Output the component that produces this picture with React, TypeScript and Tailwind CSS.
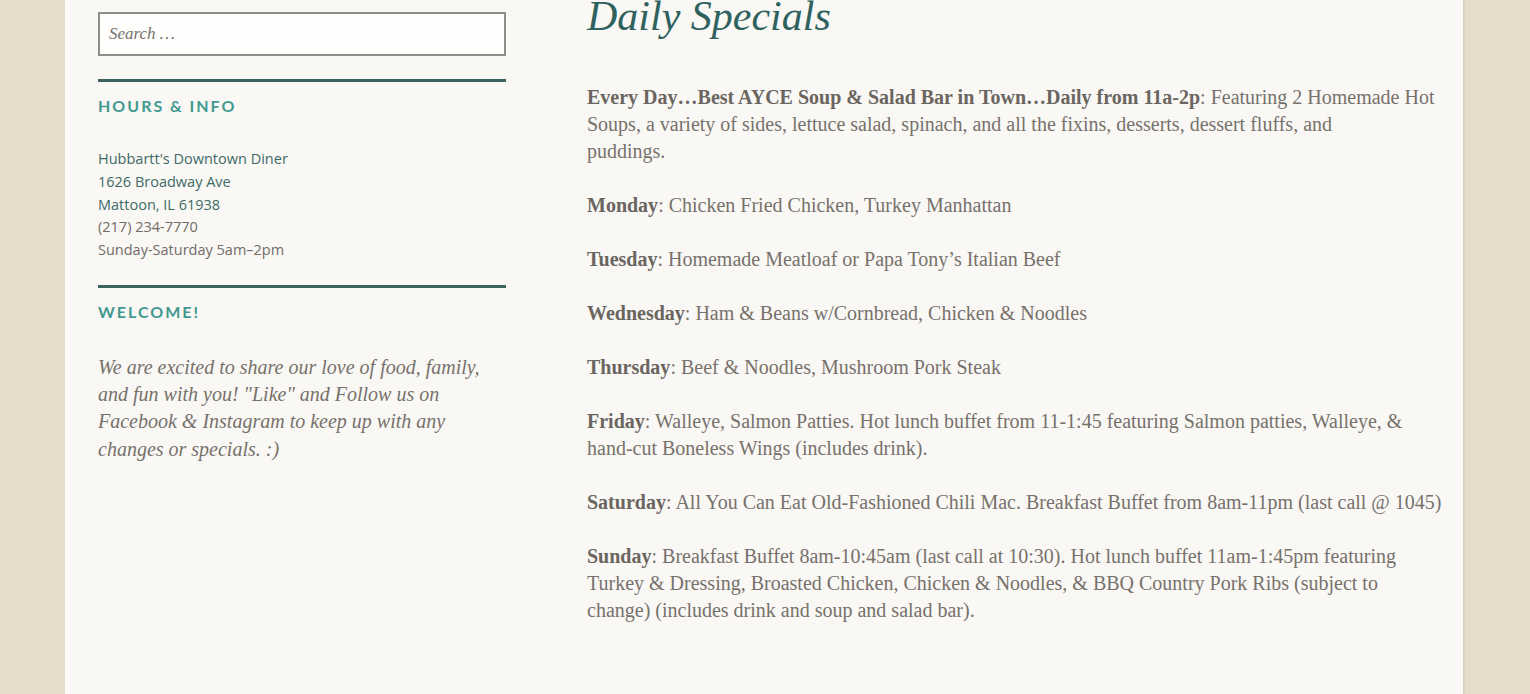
import { Fragment } from 'react';

const serif = { fontFamily: '"Liberation Serif", "DejaVu Serif", serif' };
const sans = { fontFamily: '"Open Sans", Lato, sans-serif' };

// line breaks follow the original layout
const specials = [
  {
    day: 'Every Day…Best AYCE Soup & Salad Bar in Town…Daily from 11a-2p',
    text: 'Featuring 2 Homemade Hot\nSoups, a variety of sides, lettuce salad, spinach, and all the fixins, desserts, dessert fluffs, and\npuddings.',
  },
  { day: 'Monday', text: 'Chicken Fried Chicken, Turkey Manhattan' },
  { day: 'Tuesday', text: 'Homemade Meatloaf or Papa Tony’s Italian Beef' },
  { day: 'Wednesday', text: 'Ham & Beans w/Cornbread, Chicken & Noodles' },
  { day: 'Thursday', text: 'Beef & Noodles,  Mushroom Pork Steak' },
  {
    day: 'Friday',
    text: 'Walleye, Salmon Patties. Hot lunch buffet from 11-1:45 featuring Salmon patties, Walleye, &\nhand-cut Boneless Wings (includes drink).',
  },
  {
    day: 'Saturday',
    text: 'All You Can Eat Old-Fashioned Chili Mac. Breakfast Buffet from 8am-11pm (last call @ 1045)',
  },
  {
    day: 'Sunday',
    text: 'Breakfast Buffet 8am-10:45am (last call at 10:30). Hot lunch buffet 11am-1:45pm featuring\nTurkey & Dressing, Broasted Chicken, Chicken & Noodles, & BBQ Country Pork Ribs (subject to\nchange) (includes drink and soup and salad bar).',
  },
];

function WidgetTitle({ children }: { children: string }) {
  return (
    <div className="border-t-[3px] border-[#3b625f] pt-[14px]">
      <h2
        className="text-[16px] font-bold tracking-[2px] text-[#42998f] leading-[20px]"
        style={{ fontFamily: 'Lato, "Open Sans", sans-serif' }}
      >
        {children}
      </h2>
    </div>
  );
}

function Sidebar() {
  return (
    <aside className="w-[408px] shrink-0 pt-[12px]">
      <div className="h-[44px] border-2 border-[#8d8d8a] bg-[#fefefd] flex items-center px-[9px]">
        <span className="italic text-[17px] text-[#77726d]" style={serif}>
          Search …
        </span>
      </div>

      <div className="mt-[23px]">
        <WidgetTitle>HOURS &amp; INFO</WidgetTitle>
        <div className="mt-[32px] text-[14.5px] leading-[22.75px] text-[#726c66]" style={sans}>
          <div className="text-[#3e6a67]">Hubbartt's Downtown Diner</div>
          <div className="text-[#3e6a67]">1626 Broadway Ave</div>
          <div className="text-[#3e6a67]">Mattoon, IL 61938</div>
          <div>(217) 234-7770</div>
          <div>Sunday-Saturday 5am–2pm</div>
        </div>
      </div>

      <div className="mt-[23px]">
        <WidgetTitle>WELCOME!</WidgetTitle>
        <p
          className="mt-[32px] italic text-[20px] leading-[27.3px] text-[#77716b]"
          style={serif}
        >
          We are excited to share our love of food, family, and fun with you! "Like" and Follow us on
          Facebook &amp; Instagram to keep up with any changes or specials. :)
        </p>
      </div>
    </aside>
  );
}

function Main() {
  return (
    <main className="ml-[81px] w-[860px]">
      <h1 className="italic text-[42px] leading-[40px] text-[#2f625e] -mt-[4px]" style={serif}>
        Daily Specials
      </h1>
      <div className="mt-[48px] text-[20px] leading-[27px] text-[#77716b]" style={serif}>
        {specials.map((s) => (
          <p key={s.day} className="mb-[27px]">
            <strong className="font-bold text-[#6b655f]">{s.day}</strong>:{' '}
            {s.text.split('\n').map((line, i) => (
              <Fragment key={i}>
                {i > 0 && <br />}
                {line}
              </Fragment>
            ))}
          </p>
        ))}
      </div>
    </main>
  );
}

export default function App() {
  return (
    <div className="min-h-screen bg-[#e5dccb]">
      <div className="mx-[65px] min-h-[694px] w-[1400px] bg-[#f9f8f5] border-l-2 border-l-[#fbfaf6] border-r-2 border-r-[#dcd3c4] flex pl-[31px]">
        <Sidebar />
        <Main />
      </div>
    </div>
  );
}
